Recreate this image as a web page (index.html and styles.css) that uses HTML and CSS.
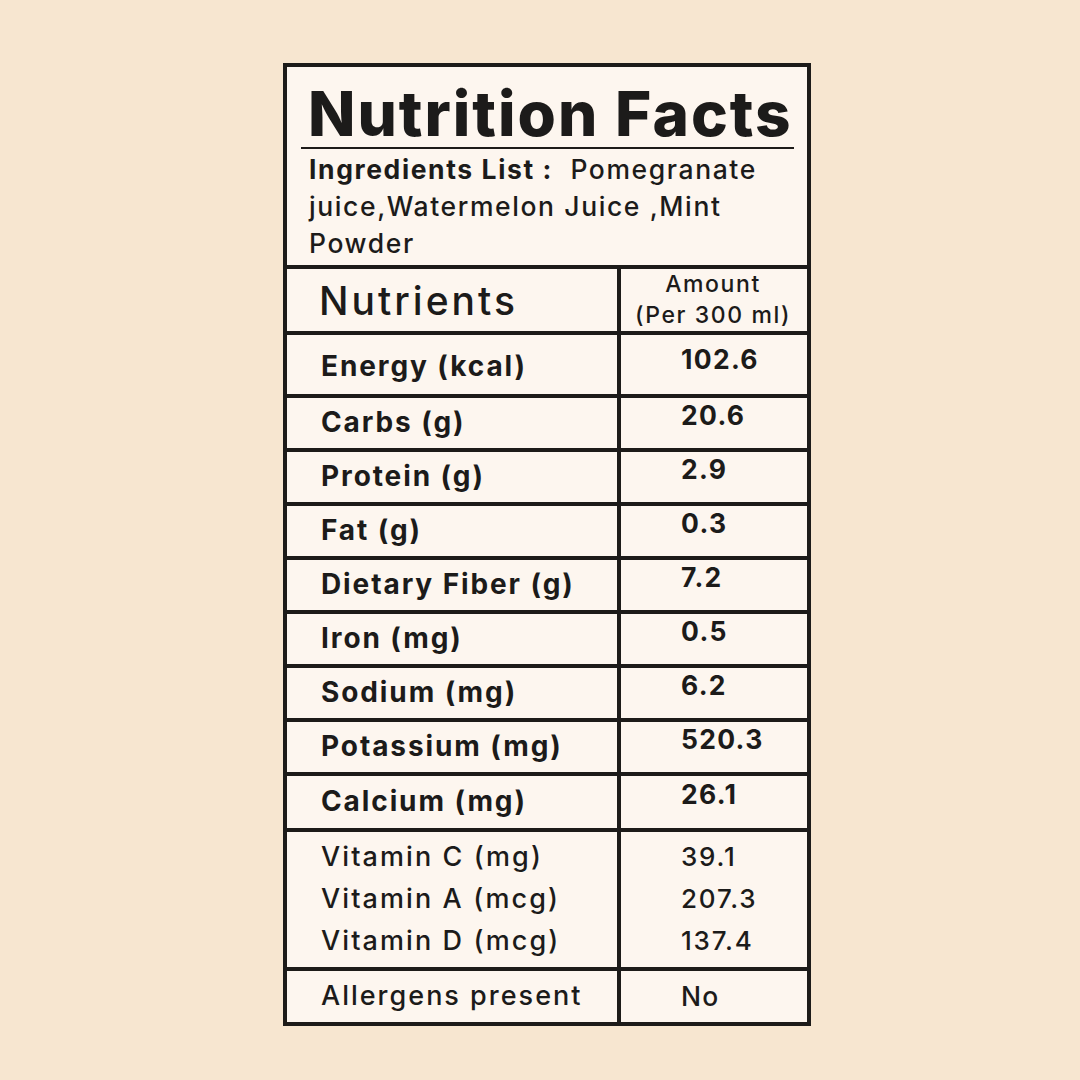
FILE: index.html
```html
<!DOCTYPE html>
<html lang="en">
<head>
<meta charset="utf-8">
<title>Nutrition Facts</title>
<link rel="stylesheet" href="styles.css">
</head>
<body>
<div class="label">
  <div class="head">
    <h1 class="title">Nutrition Facts</h1>
    <p class="ingredients"><b>Ingredients List :</b>&nbsp; Pomegranate<br>juice,Watermelon Juice ,Mint<br>Powder</p>
  </div>
  <div class="row row-head">
    <div class="cell name">Nutrients</div>
    <div class="cell amount">Amount<br>(Per 300 ml)</div>
  </div>
  <div class="row row-energy">
    <div class="cell name bold">Energy (kcal)</div>
    <div class="cell value bold">102.6</div>
  </div>
  <div class="row">
    <div class="cell name bold">Carbs (g)</div>
    <div class="cell value bold">20.6</div>
  </div>
  <div class="row">
    <div class="cell name bold">Protein (g)</div>
    <div class="cell value bold">2.9</div>
  </div>
  <div class="row">
    <div class="cell name bold">Fat (g)</div>
    <div class="cell value bold">0.3</div>
  </div>
  <div class="row">
    <div class="cell name bold">Dietary Fiber (g)</div>
    <div class="cell value bold">7.2</div>
  </div>
  <div class="row">
    <div class="cell name bold">Iron (mg)</div>
    <div class="cell value bold">0.5</div>
  </div>
  <div class="row">
    <div class="cell name bold">Sodium (mg)</div>
    <div class="cell value bold">6.2</div>
  </div>
  <div class="row">
    <div class="cell name bold">Potassium (mg)</div>
    <div class="cell value bold">520.3</div>
  </div>
  <div class="row row-tall">
    <div class="cell name bold">Calcium (mg)</div>
    <div class="cell value bold">26.1</div>
  </div>
  <div class="row row-vit">
    <div class="cell list">
      <span>Vitamin C (mg)</span>
      <span>Vitamin A (mcg)</span>
      <span>Vitamin D (mcg)</span>
    </div>
    <div class="cell list vals">
      <span>39.1</span>
      <span>207.3</span>
      <span>137.4</span>
    </div>
  </div>
  <div class="row row-last">
    <div class="cell name">Allergens present</div>
    <div class="cell value plain">No</div>
  </div>
</div>
</body>
</html>
```

FILE: styles.css
```css
* { box-sizing: border-box; }

html, body {
  margin: 0;
  padding: 0;
}

body {
  background: #f7e6d0;
  width: 1080px;
  height: 1080px;
  padding: 63px 0 0 283px;
  font-family: "Inter", "Lato", "Noto Sans", sans-serif;
  color: #1c1b1a;
}

.label {
  width: 528px;
  border: 4px solid #1d1b19;
  background: #fdf6ef;
}

.head {
  height: 198px;
  padding-top: 16px;
}

.title {
  margin: 0 13px 0 14px;
  padding: 0 0 0 7px;
  font-size: 62px;
  font-weight: 800;
  line-height: 62px;
  letter-spacing: 2px;
  border-bottom: 2px solid #1d1b19;
  height: 66px;
  white-space: nowrap;
}

.ingredients {
  margin: 0;
  padding: 2px 10px 0 22px;
  font-size: 26.5px;
  font-weight: 500;
  line-height: 37px;
  letter-spacing: 1.6px;
  white-space: nowrap;
}

.ingredients b {
  font-weight: 700;
}

.row {
  display: grid;
  grid-template-columns: 334px 186px;
  height: 54px;
  border-top: 4px solid #1d1b19;
}

.row-head { height: 66px; }
.row-energy { height: 63px; }
.row-tall { height: 56px; }
.row-vit { height: 139px; }
.row-last { height: 55px; }

.cell {
  display: flex;
  align-items: center;
  white-space: nowrap;
}

.cell:first-child {
  border-right: 4px solid #1d1b19;
}

.name {
  padding-left: 34px;
  font-size: 27px;
  font-weight: 500;
  letter-spacing: 2px;
  padding-bottom: 2px;
}

.name.bold {
  font-size: 28px;
  letter-spacing: 1.9px;
}

.row-energy .name {
  padding-bottom: 0;
  padding-top: 2px;
}

.row-head .name {
  padding-left: 32px;
  font-size: 39px;
  font-weight: 500;
  letter-spacing: 3px;
  padding-bottom: 4px;
}

.bold { font-weight: 700; }

.amount {
  flex-direction: column;
  justify-content: center;
  text-align: center;
  font-size: 23px;
  font-weight: 500;
  line-height: 31px;
  letter-spacing: 1.6px;
  padding-bottom: 4px;
  padding-right: 2px;
}

.value {
  padding-left: 60px;
  font-size: 26.5px;
  letter-spacing: 1.3px;
  padding-bottom: 16px;
}

.row-energy .value {
  padding-bottom: 12px;
}

.value.plain {
  font-weight: 500;
  padding-bottom: 2px;
}

.list {
  flex-direction: column;
  align-items: flex-start;
  justify-content: flex-start;
  padding-top: 4px;
  padding-left: 34px;
  font-size: 27px;
  font-weight: 500;
  line-height: 42px;
  letter-spacing: 2.1px;
}

.list.vals {
  padding-left: 60px;
  font-size: 26px;
  letter-spacing: 1.8px;
}
```
